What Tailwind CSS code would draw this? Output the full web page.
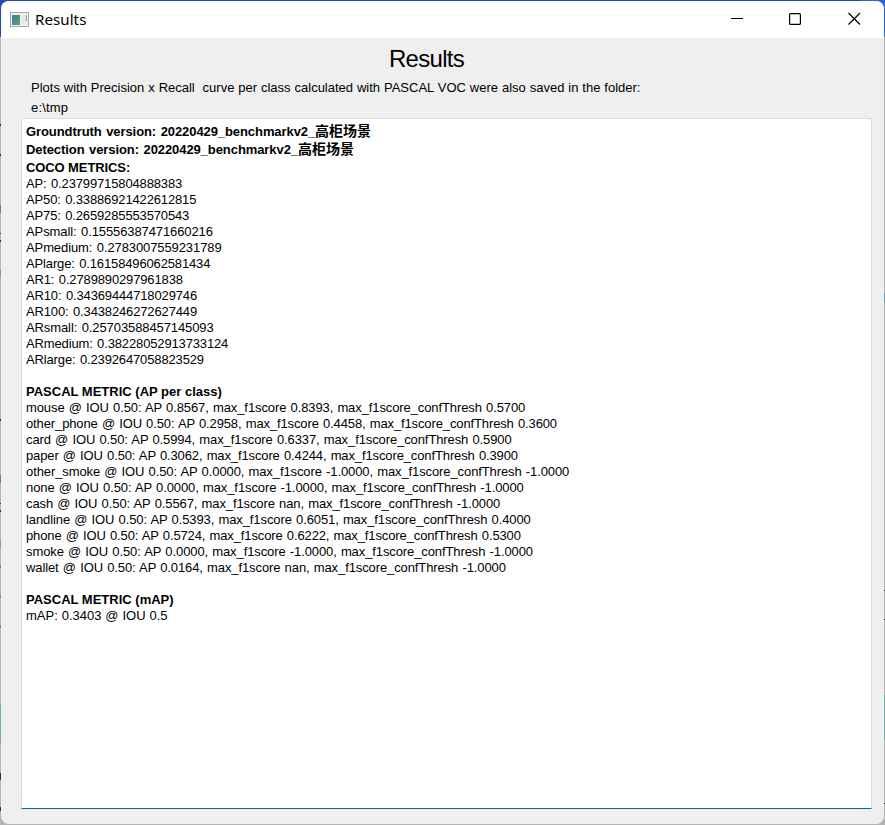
<!DOCTYPE html>
<html lang="en">
<head>
<meta charset="utf-8">
<title>Results</title>
<script src="https://cdn.jsdelivr.net/npm/@tailwindcss/browser@4"></script>
</head>
<body class="relative h-[825px] w-[885px] overflow-hidden bg-[#b4b4b4] font-['Liberation_Sans','Noto_Sans_CJK_SC',sans-serif] text-[13px] text-black">
<!-- desktop behind the window -->
<svg class="absolute inset-0 -z-10 h-[825px] w-[885px]" viewBox="0 0 885 825" shape-rendering="crispEdges" fill="#333">
  <path fill="#1d4fae" d="M0 0H885V37H0z"/><path fill="#2a66d8" d="M860 0H885V37H860z"/>
  <path d="M0 124h2v2H0zM0 154h2v2H0zM0 233h2v1H0zM0 240h2v2H0zM0 419h2v2H0zM0 503h2v1H0zM0 510h2v2H0zM0 773h2v7H0zM0 807h2v4H0zM884 590h1v1h-1zM884 619h1v1h-1zM884 803h1v1h-1z"/>
  <path fill="#4a82bd" d="M0 205h2v8H0zM0 475h2v8H0z"/>
  <path fill="#62a5b5" d="M0 270h2v7H0zM0 541h2v6H0zM884 293h1v10h-1z"/>
  <path fill="#bd7630" d="M0 565h2v3H0zM0 595h2v3H0zM0 625h2v3H0z"/>
  <path fill="#6fae9e" d="M0 704h2v40H0zM884 695h1v45h-1z"/>
</svg>
<div class="flex h-full flex-col p-px">
  <main class="flex min-h-0 flex-1 flex-col overflow-hidden rounded-[8px] bg-[#efefef]">
    <header class="flex h-[37px] shrink-0 items-center bg-white pl-[9px]">
      <svg class="-mt-px h-[15px] w-[19px]" viewBox="0 0 19 15">
        <defs><linearGradient id="g" x1="0" y1="0" x2="1" y2="1"><stop offset="0" stop-color="#3f78a8"/><stop offset="1" stop-color="#58a873"/></linearGradient></defs>
        <rect x=".5" y=".5" width="18" height="14" fill="#f1f2f3" stroke="#a2a6aa"/>
        <rect x="2" y="3" width="8" height="10" fill="url(#g)"/>
        <rect x="11" y="3" width="5" height="10" fill="#e6e9ea"/>
        <rect x="16" y="3" width="1" height="6" fill="#62aa98"/>
      </svg>
      <h1 class="ml-[6px] font-['Noto_Sans'] text-[15px] tracking-[0.1px]">Results</h1>
      <svg class="mr-[23px] mb-[3px] ml-auto h-[13px] w-[131px]" viewBox="0 0 131 13" fill="none" stroke="#000" stroke-width="1.2">
        <path d="M1 6.500H13" stroke-width="1"/><rect x="59.600" y="1.600" width="10.800" height="10.800" rx="1"/><path d="M118.500 1L130 12.500M130 1L118.500 12.500"/>
      </svg>
    </header>
    <h2 class="mt-[5px] -ml-8 h-8 text-center text-[24px] leading-8 tracking-[-0.7px]">Results</h2>
    <div class="mt-[3px] ml-[30px] h-10 leading-5">
      <p class="whitespace-pre [word-spacing:0.3px]">Plots with Precision x Recall  curve per class calculated with PASCAL VOC were also saved in the folder:</p>
      <p class="tracking-[0.15px]">e:\tmp</p>
    </div>
    <section class="mr-[12px] mb-[15px] ml-[20px] flex-1 border border-[#d9dcde] border-b-[#0067c0] bg-white pt-[3px] pl-1 leading-4">
      <div class="font-bold">
        <p class="h-[18px] leading-[18px]"><span class="tracking-[-0.08px] [word-spacing:1px]">Groundtruth version: 20220429_benchmarkv2_</span><span class="text-[14px]">高柜场景</span></p>
        <p class="h-[18px] leading-[18px]"><span class="tracking-[-0.08px] [word-spacing:1px]">Detection version: 20220429_benchmarkv2_</span><span class="text-[14px]">高柜场景</span></p>
        <p class="mt-[2px] h-[15px] leading-4 tracking-[-0.1px]">COCO METRICS:</p>
      </div>
      <div class="mt-px tracking-[-0.14px] [word-spacing:1px]">
        <p>AP: 0.23799715804888383</p>
        <p>AP50: 0.33886921422612815</p>
        <p>AP75: 0.2659285553570543</p>
        <p class="tracking-[-0.1px]">APsmall: 0.15556387471660216</p>
        <p class="tracking-[-0.1px]">APmedium: 0.2783007559231789</p>
        <p>APlarge: 0.16158496062581434</p>
        <p>AR1: 0.2789890297961838</p>
        <p>AR10: 0.34369444718029746</p>
        <p>AR100: 0.3438246272627449</p>
        <p class="tracking-[-0.1px]">ARsmall: 0.25703588457145093</p>
        <p>ARmedium: 0.38228052913733124</p>
        <p>ARlarge: 0.2392647058823529</p>
      </div>
      <p class="mt-4 font-bold">PASCAL METRIC (AP per class)</p>
      <div class="tracking-[-0.1px] [word-spacing:0.7px]">
        <p>mouse @ IOU 0.50: AP 0.8567, max_f1score 0.8393, max_f1score_confThresh 0.5700</p>
        <p class="tracking-[-0.12px]">other_phone @ IOU 0.50: AP 0.2958, max_f1score 0.4458, max_f1score_confThresh 0.3600</p>
        <p>card @ IOU 0.50: AP 0.5994, max_f1score 0.6337, max_f1score_confThresh 0.5900</p>
        <p class="tracking-[-0.12px]">paper @ IOU 0.50: AP 0.3062, max_f1score 0.4244, max_f1score_confThresh 0.3900</p>
        <p>other_smoke @ IOU 0.50: AP 0.0000, max_f1score -1.0000, max_f1score_confThresh -1.0000</p>
        <p>none @ IOU 0.50: AP 0.0000, max_f1score -1.0000, max_f1score_confThresh -1.0000</p>
        <p>cash @ IOU 0.50: AP 0.5567, max_f1score nan, max_f1score_confThresh -1.0000</p>
        <p>landline @ IOU 0.50: AP 0.5393, max_f1score 0.6051, max_f1score_confThresh 0.4000</p>
        <p class="tracking-[-0.12px]">phone @ IOU 0.50: AP 0.5724, max_f1score 0.6222, max_f1score_confThresh 0.5300</p>
        <p>smoke @ IOU 0.50: AP 0.0000, max_f1score -1.0000, max_f1score_confThresh -1.0000</p>
        <p>wallet @ IOU 0.50: AP 0.0164, max_f1score nan, max_f1score_confThresh -1.0000</p>
      </div>
      <p class="mt-4 font-bold">PASCAL METRIC (mAP)</p>
      <p class="[word-spacing:0.3px]">mAP: 0.3403 @ IOU 0.5</p>
    </section>
  </main>
</div>
</body>
</html>
